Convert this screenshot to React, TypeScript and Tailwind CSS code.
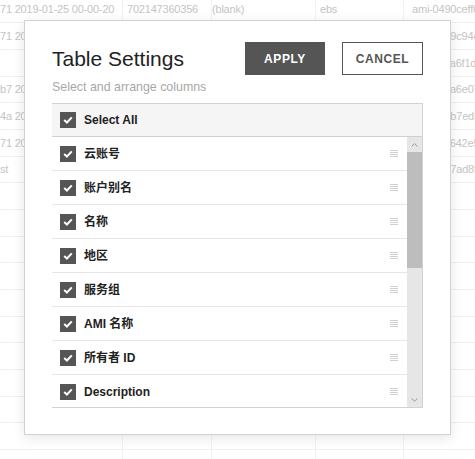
import React from "react";

const bgRows: string[][] = [
  ["71 2019-01-25 00-00-20", "702147360356", "(blank)", "ebs", "ami-0490ceff6"],
  ["71 2019-01-25 00-00-20", "702147360356", "(blank)", "ebs", "ami-0a59c94e1"],
  ["", "702147360356", "(blank)", "ebs", "ami-0c5a6f1d2"],
  ["b7 2019-01-25 00-00-20", "702147360356", "(blank)", "ebs", "ami-03ffa6e07"],
  ["4a 2019-01-25 00-00-20", "702147360356", "(blank)", "ebs", "ami-0e6b7ed3a"],
  ["71 2019-01-25 00-00-20", "702147360356", "(blank)", "ebs", "ami-01c642e5b"],
  ["st", "702147360356", "(blank)", "ebs", "ami-0497ad8f4"],
  ["", "", "", "", ""],
  ["", "", "", "", ""],
  ["", "", "", "", ""],
  ["", "", "", "", ""],
  ["", "", "", "", ""],
  ["", "", "", "", ""],
  ["", "", "", "", ""],
  ["", "", "", "", ""],
  ["", "", "", "", ""],
  ["", "", "", "", ""],
  ["", "", "", "", ""],
];

const columns = [
  "云账号",
  "账户别名",
  "名称",
  "地区",
  "服务组",
  "AMI 名称",
  "所有者 ID",
  "Description",
  "平台",
  "架构",
  "状态",
  "创建时间",
  "虚拟化类型",
  "根设备类型",
  "公开",
  "镜像类型",
];

function Check() {
  return (
    <span className="flex h-4 w-4 shrink-0 items-center justify-center bg-[#555555]">
      <svg width="10" height="8" viewBox="0 0 10 8">
        <path d="M1.2 4.1 L3.9 6.5 L8.8 1.4" fill="none" stroke="#ffffff" strokeWidth="2" />
      </svg>
    </span>
  );
}

function Handle() {
  return (
    <svg width="8" height="7" viewBox="0 0 8 7" className="shrink-0">
      <rect x="0" y="0" width="8" height="1" fill="#cfcfcf" />
      <rect x="0" y="2" width="8" height="1" fill="#cfcfcf" />
      <rect x="0" y="4" width="8" height="1" fill="#cfcfcf" />
      <rect x="0" y="6" width="8" height="1" fill="#cfcfcf" />
    </svg>
  );
}

export default function App() {
  return (
    <div className="relative h-[459px] w-[475px] overflow-hidden bg-white font-['Liberation_Sans','Noto_Sans_CJK_SC',sans-serif]">
      {/* background table */}
      <div className="-mt-[3.33px] flex flex-col text-[11px] tracking-[-0.2px] text-[#c4c4c4]">
        {bgRows.map((r, i) => (
          <div
            key={i}
            className="grid h-[26.67px] grid-cols-[123px_89px_104px_88px_71px] border-b border-[#f0f0f0]"
          >
            <div className="flex items-center overflow-hidden whitespace-nowrap border-r border-[#f2f2f2] pl-0">{r[0]}</div>
            <div className="flex items-center overflow-hidden whitespace-nowrap border-r border-[#f2f2f2] pl-1">{r[1]}</div>
            <div className="flex items-center overflow-hidden whitespace-nowrap border-r border-[#f2f2f2] pl-0">{r[2]}</div>
            <div className="flex items-center overflow-hidden whitespace-nowrap border-r border-[#f2f2f2] pl-1">{r[3]}</div>
            <div className="flex items-center overflow-hidden whitespace-nowrap pl-[8px]">{r[4]}</div>
          </div>
        ))}
      </div>

      {/* modal */}
      <div className="absolute left-[24px] top-[20px] w-[427px] border border-[#d2d2d2] bg-white px-[27px] pb-[26px] pt-[21px] shadow-[0_3px_12px_rgba(0,0,0,0.1)]">
        <div className="flex h-[33px] items-center">
          <h1 className="flex-1 text-[21px] leading-[24px] text-[#222222]">Table Settings</h1>
          <button className="h-[33px] w-[80px] bg-[#555555] text-[12px] font-bold tracking-[0.6px] text-white">
            APPLY
          </button>
          <button className="ml-[17px] h-[33px] w-[81px] border border-[#555555] bg-white text-[12px] font-bold tracking-[0.6px] text-[#555555]">
            CANCEL
          </button>
        </div>
        <p className="mt-1 h-4 text-[12.4px] leading-4 text-[#a8a8a8]">Select and arrange columns</p>

        <div className="mt-2 border-b border-r border-t border-[#d2d2d2]">
          <div className="flex h-[33px] items-center gap-2 border-b border-[#d0d0d0] bg-[#f5f5f5] pl-2">
            <Check />
            <span className="text-[12px] font-bold text-[#222222]">Select All</span>
          </div>
          <div className="flex h-[270px]">
            <div className="flex-1 overflow-hidden">
              {columns.map((c) => (
                <div
                  key={c}
                  className="flex h-[34px] items-center gap-2 border-b border-[#e6e6e6] pl-2 pr-[9px]"
                >
                  <Check />
                  <span className="flex-1 text-[12px] font-bold text-[#222222]">{c}</span>
                  <Handle />
                </div>
              ))}
            </div>
            <div className="flex w-[15px] flex-col bg-[#e6e6e6]">
              <div className="flex h-[15px] items-center justify-center">
                <svg width="7" height="4" viewBox="0 0 7 4">
                  <path d="M0.5 3.5 L3.5 0.7 L6.5 3.5" fill="none" stroke="#9a9a9a" strokeWidth="1" />
                </svg>
              </div>
              <div className="h-[116px] bg-[#bdbdbd]" />
              <div className="flex-1" />
              <div className="flex h-[15px] items-center justify-center">
                <svg width="7" height="4" viewBox="0 0 7 4">
                  <path d="M0.5 0.5 L3.5 3.3 L6.5 0.5" fill="none" stroke="#9a9a9a" strokeWidth="1" />
                </svg>
              </div>
            </div>
          </div>
        </div>
      </div>
    </div>
  );
}
